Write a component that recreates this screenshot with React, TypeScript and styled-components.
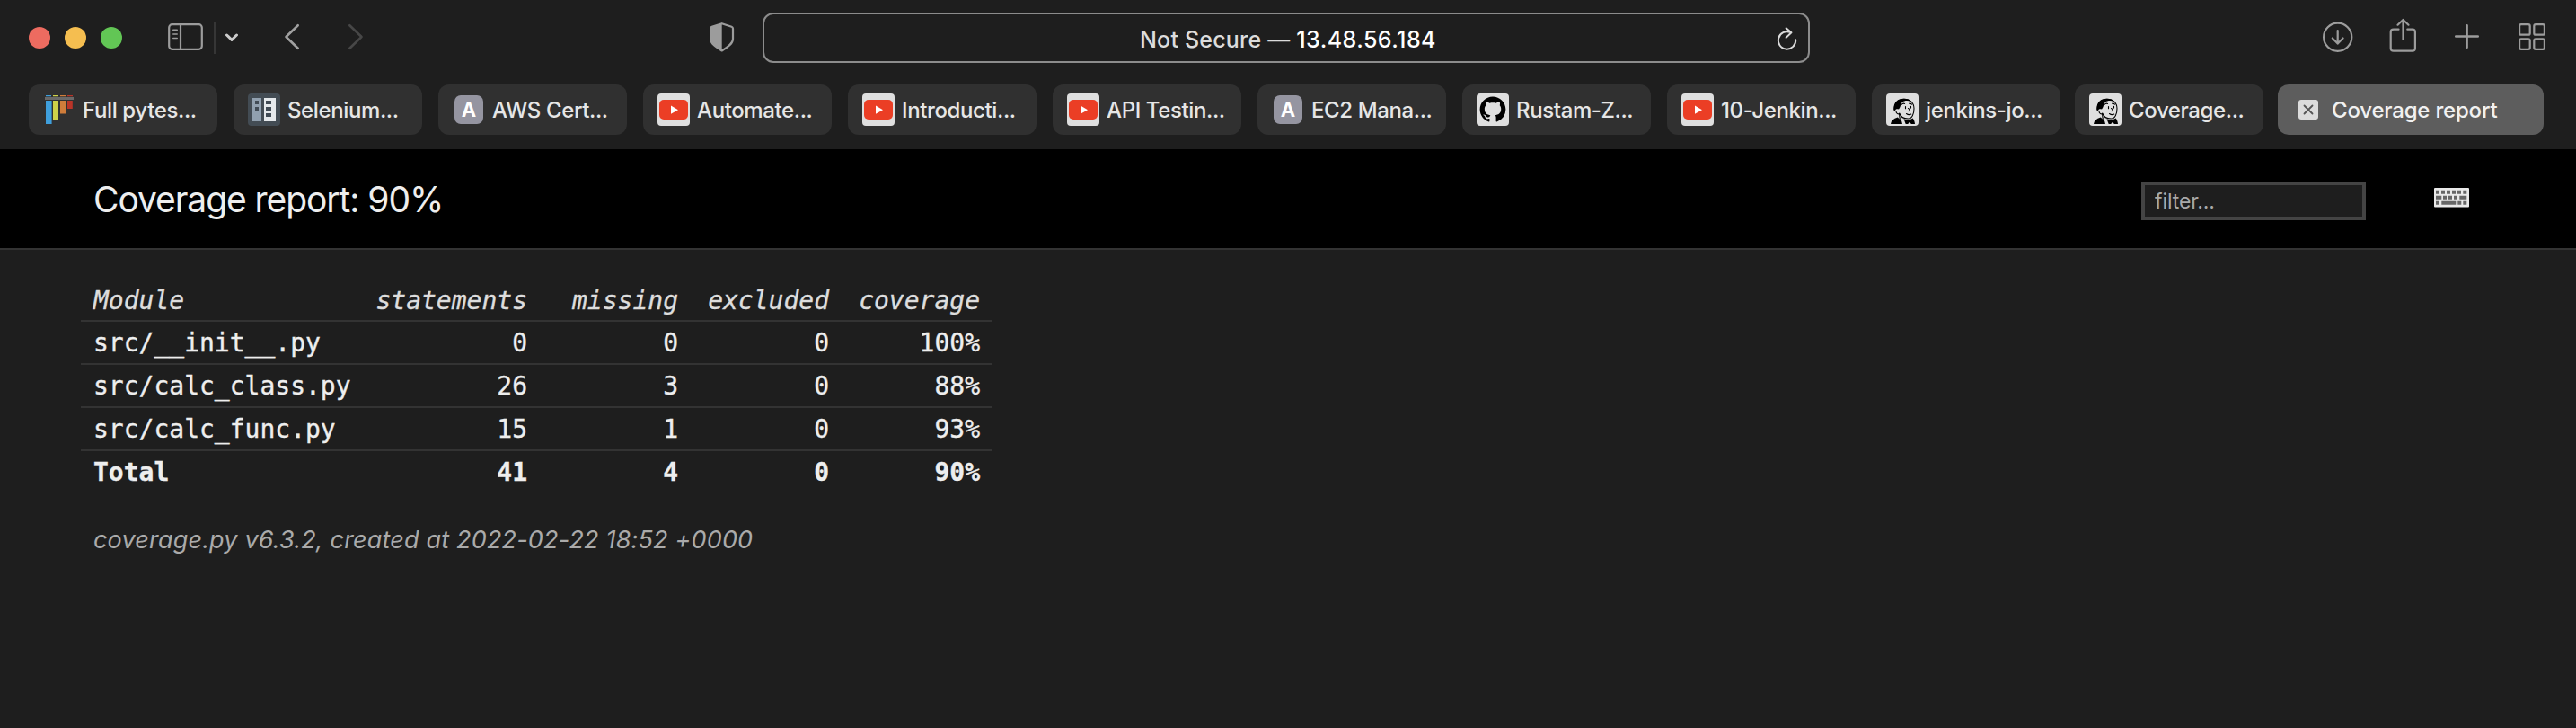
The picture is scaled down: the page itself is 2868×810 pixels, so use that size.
import React from 'react';
import styled, { createGlobalStyle, css } from 'styled-components';

const GlobalStyle = createGlobalStyle`
  *, *::before, *::after { box-sizing: border-box; }
  body {
    margin: 0;
    background: #1e1e1e;
    color: #eee;
    font-family: Inter, "Liberation Sans", sans-serif;
    overflow: hidden;
  }
`;

const Window = styled.div`
  width: 100%;
  min-height: 810px;
  background: #1e1e1e;
`;

/* ---------- Browser chrome ---------- */

const Chrome = styled.header`
  height: 166px;
  background: #1e1e1e;
`;

const Toolbar = styled.div`
  display: flex;
  align-items: center;
  height: 84px;
  padding: 0 32px;
`;

const WindowControls = styled.div`
  display: flex;
  gap: 16px;
`;

const Light = styled.span<{ $color: string }>`
  width: 24px;
  height: 24px;
  border-radius: 50%;
  background: ${(p) => p.$color};
`;

const ToolIcon = styled.svg<{ $gap?: number; $color?: string }>`
  flex: none;
  height: 44px;
  margin-left: ${(p) => p.$gap ?? 0}px;
  fill: none;
  stroke: ${(p) => p.$color ?? '#9c9c9c'};
  stroke-width: 2.2;
  stroke-linecap: round;
  stroke-linejoin: round;
`;

const Divider = styled.span`
  width: 2px;
  height: 36px;
  margin-left: 10px;
  background: #363636;
`;

const AddressBar = styled.div`
  display: flex;
  align-items: center;
  width: 1166px;
  height: 56px;
  margin-left: 30px;
  padding: 3px 11px 0 418px;
  border: 2px solid #8c8c8c;
  border-radius: 12px;
  font-size: 25px;
  font-weight: 500;
  white-space: pre;
`;

const Security = styled.span`
  color: #dcdcdc;
  letter-spacing: 0.2px;
`;

const Host = styled.span`
  flex: 1;
  color: #fff;
  letter-spacing: 0.45px;
`;

const Actions = styled.div`
  display: flex;
  align-items: center;
  margin-left: auto;
`;

const TabBar = styled.nav`
  display: flex;
  padding: 10px 32px 0;
`;

const Tab = styled.div<{ $active?: boolean; $gap: number }>`
  display: flex;
  align-items: center;
  flex: none;
  width: 210px;
  height: 56px;
  margin-left: ${(p) => p.$gap}px;
  padding-left: 16px;
  gap: 8px;
  border-radius: 12px;
  background: #303030;
  color: #e6e6e6;
  font-size: 24px;
  font-weight: 500;
  letter-spacing: -0.38px;
  white-space: nowrap;
  ${(p) =>
    p.$active &&
    css`
      width: 296px;
      padding-left: 23px;
      gap: 15px;
      background: #5d5d5d;
      color: #f1f1f1;
      letter-spacing: -0.2px;
    `}
`;

const Favicon = styled.svg`
  flex: none;
  width: 36px;
  height: 36px;
`;

const LetterIcon = styled.span`
  display: flex;
  align-items: center;
  justify-content: center;
  width: 32px;
  height: 32px;
  margin: 0 2px;
  border-radius: 7px;
  background: #9595a1;
  color: #fff;
  font-size: 22px;
  font-weight: 700;
  letter-spacing: 0;
`;

const CloseIcon = styled.svg`
  flex: none;
  width: 22px;
  height: 22px;
`;

/* ---------- Report page ---------- */

const ReportHeader = styled.div`
  display: flex;
  align-items: center;
  height: 112px;
  padding: 0 119px 0 104px;
  border-bottom: 2px solid #333;
  background: #000;
`;

const Title = styled.h1`
  margin: 0 auto 0 0;
  color: #eee;
  font-size: 39px;
  font-weight: 400;
  letter-spacing: -1.07px;
`;

const Filter = styled.input`
  width: 250px;
  height: 43px;
  margin: 5px 76px 0 0;
  padding: 0 11px;
  border: 4px solid #444;
  border-radius: 0;
  outline: none;
  background: #1e1e1e;
  color: #eee;
  font: 400 23px Inter, sans-serif;
  letter-spacing: -0.1px;
  &::placeholder {
    color: #a9a9a9;
    opacity: 1;
  }
`;

const KeyboardIcon = styled.svg`
  flex: none;
  width: 39px;
  height: 22px;
  margin-top: -2px;
`;

const Content = styled.main`
  padding: 34px 90px 0;
`;

const Table = styled.table`
  border-collapse: separate;
  border-spacing: 0;
  table-layout: fixed;
  width: 1015px;
  font: 28px/44px "DejaVu Sans Mono", monospace;
  -webkit-text-stroke: 0.35px currentColor;
`;

const Cell = styled.td<{ $left?: boolean; $width?: number; $total?: boolean }>`
  height: ${(p) => (p.$total ? 46 : 48)}px;
  padding: 2px 14px 0;
  ${(p) => p.$width && `width: ${p.$width}px;`}
  border-bottom: ${(p) => (p.$total ? 'none' : '2px solid #333')};
  color: #eee;
  font-weight: ${(p) => (p.$total ? 700 : 400)};
  text-align: ${(p) => (p.$left ? 'left' : 'right')};
  white-space: nowrap;
`;

const HeadCell = styled(Cell)`
  height: 46px;
  line-height: 42px;
  color: #ddd;
  font-style: italic;
`;

const Footer = styled.footer`
  margin: 34px 0 0 14px;
  color: #aaa;
  font-size: 27px;
  font-style: italic;
  line-height: 38px;
  letter-spacing: 0.18px;
`;

/* ---------- Favicons ---------- */

const Pytest = () => (
  <Favicon viewBox="0 0 36 36">
    <path fill="#3f9fdc" d="M3 2h6v1.2H3zM3 8h6.6v26H3z" />
    <path fill="#ced149" d="M11 2h6v1.2h-6zM11 8h6v22h-6z" />
    <path fill="#cf7c3a" d="M19 2h6v1.2h-6zM19 8h6v14.6h-6z" />
    <path fill="#b93428" d="M27 2h6v1.2h-6zM27 8h5.8v9H27z" />
    <path fill="#696969" d="M2 4h32v3H2z" />
  </Favicon>
);

const Selenium = () => (
  <Favicon viewBox="0 0 36 36">
    <rect width="36" height="36" rx="4" fill="#434c54" />
    <path fill="#91a0af" d="M5 5h10v26H5z" />
    <path fill="#e4e8eb" d="M18 5h13v26H18z" />
    <path fill="#414b55" d="M8 8h4v4H8zM8 15h4v4H8zM20 8h6v4h-6zM20 15h6v4h-6zM20 22h6v4h-6z" />
  </Favicon>
);

const Youtube = () => (
  <Favicon viewBox="0 0 36 36">
    <rect width="36" height="36" rx="4" fill="#dfdfdf" />
    <rect x="2" y="7" width="32" height="22" rx="5" fill="#eb3e25" />
    <path fill="#fff" d="M15 13.6v9.2l8-4.6z" />
  </Favicon>
);

const Github = () => (
  <Favicon viewBox="0 0 36 36">
    <rect width="36" height="36" rx="4" fill="#dfdfdf" />
    <path
      transform="translate(3.6 3.4) scale(1.8)"
      fill="#000"
      d="M8 0C3.58 0 0 3.58 0 8c0 3.54 2.29 6.53 5.47 7.59.4.07.55-.17.55-.38 0-.19-.01-.82-.01-1.49-2.01.37-2.53-.49-2.69-.94-.09-.23-.48-.94-.82-1.13-.28-.15-.68-.52-.01-.53.63-.01 1.08.58 1.23.82.72 1.21 1.87.87 2.33.66.07-.52.28-.87.51-1.07-1.78-.2-3.64-.89-3.64-3.95 0-.87.31-1.59.82-2.15-.08-.2-.36-1.02.08-2.12 0 0 .67-.21 2.2.82.64-.18 1.32-.27 2-.27.68 0 1.36.09 2 .27 1.53-1.04 2.2-.82 2.2-.82.44 1.1.16 1.92.08 2.12.51.56.82 1.27.82 2.15 0 3.07-1.87 3.75-3.65 3.95.29.25.54.73.54 1.48 0 1.07-.01 1.93-.01 2.2 0 .21.15.46.55.38A8.013 8.013 0 0016 8c0-4.42-3.58-8-8-8z"
    />
  </Favicon>
);

const Jenkins = () => (
  <Favicon viewBox="0 0 36 36">
    <rect width="36" height="36" rx="4" fill="#dfdfdf" />
    <path
      fill="#dfdfdf"
      stroke="#000"
      strokeWidth="1.1"
      d="M9 18.5C9 10 14 6.3 20 6.3c6.500 0 11 4.200 11 10.500 0 5.500-2 11.200-6.500 11.200-4.500 0-8.500-2-9.500-5.500-2 1-4-.5-4-2.800z"
    />
    <path d="M8.300 17.500C8.300 9.500 13 5.700 19.500 5.700c4 0 6.800 1.100 8.800 3.400-3.800-1.600-8-1.500-10 .4-2.600 2-2 5.500-4.300 8-2-.4-3.500-.4-4.500 1.600z" />
    <path d="M5 34c.4-3.400 3-6 7.800-7.400l4.400 4.100L18 34z" />
    <path d="M19.500 28.200l5.200 1.900 5-2.600c1.300 1.800 2.100 4.100 2.300 6.500h-4l-2.200-2-1.600 2h-2.500z" />
    <path
      fill="none"
      stroke="#000"
      strokeWidth="1.100"
      strokeLinecap="round"
      d="M17 12.500c1-1.300 2.300-1.600 3.600-1.100M25.500 11.200c1.200-.2 2.200.2 3 1M21.500 14.500v2.200M27.500 14.300v1.800M24.500 16.500c1.700 1 2 2 .6 3.200M22.500 22.500c1.700 1.200 3.500 1.400 5.300.6M14.500 22c.2 2 .2 4 .8 6.500"
    />
  </Favicon>
);

const Letter = () => <LetterIcon>A</LetterIcon>;

const tabs: { label: string; Icon: React.FC; gap?: number }[] = [
  { label: 'Full pytes...', Icon: Pytest, gap: 0 },
  { label: 'Selenium...', Icon: Selenium },
  { label: 'AWS Cert...', Icon: Letter },
  { label: 'Automate...', Icon: Youtube },
  { label: 'Introducti...', Icon: Youtube },
  { label: 'API Testin...', Icon: Youtube },
  { label: 'EC2 Mana...', Icon: Letter },
  { label: 'Rustam-Z...', Icon: Github },
  { label: '10-Jenkin...', Icon: Youtube },
  { label: 'jenkins-jo...', Icon: Jenkins },
  { label: 'Coverage...', Icon: Jenkins, gap: 16 },
];

const columns = ['statements', 'missing', 'excluded', 'coverage'];

const modules: [string, string, string, string, string][] = [
  ['src/__init__.py', '0', '0', '0', '100%'],
  ['src/calc_class.py', '26', '3', '0', '88%'],
  ['src/calc_func.py', '15', '1', '0', '93%'],
];

const total = ['41', '4', '0', '90%'];

const BrowserToolbar = () => (
  <Toolbar>
    <WindowControls>
      <Light $color="#ed6b60" />
      <Light $color="#f5be50" />
      <Light $color="#62c655" />
    </WindowControls>
    <ToolIcon $gap={50} width="42" viewBox="0 0 42 44">
      <rect x="2.200" y="7.200" width="36.600" height="27.600" rx="3.500" />
      <path d="M15 7.500v27" />
      <path strokeWidth="1.600" d="M6.800 13.400h4.400M6.800 18h4.400M6.800 22.500h4.400" />
    </ToolIcon>
    <Divider />
    <ToolIcon $gap={9} $color="#cbcbcb" width="18" viewBox="0 0 18 44">
      <path strokeWidth="3" d="M3.500 19l5.500 5.400 5.500-5.400" />
    </ToolIcon>
    <ToolIcon $gap={48} $color="#a0a0a0" width="20" viewBox="0 0 20 44">
      <path strokeWidth="2.600" d="M16.700 8.200l-13.200 12.800 13.200 12.800" />
    </ToolIcon>
    <ToolIcon $gap={51} $color="#474747" width="20" viewBox="0 0 20 44">
      <path strokeWidth="2.600" d="M3.300 8.200l13.200 12.800-13.200 12.800" />
    </ToolIcon>
    <ToolIcon $gap={382} width="31" viewBox="0 0 31 44">
      <path d="M15.700 6.200l10.800 3.600c.8.300 1.500.9 1.500 1.900v11.600c0 5.200-5.500 9-12.300 13.200-6.800-4.200-12.500-8-12.500-13.200V11.700c0-1 .5-1.600 1.400-1.900z" />
      <path
        stroke="none"
        fill="#9c9c9c"
        d="M15.700 6L4.600 9.800c-.9.300-1.400.9-1.400 1.900v11.600c0 5.200 5.700 9 12.500 13.200z"
      />
    </ToolIcon>
    <AddressBar>
      <Security>Not Secure — </Security>
      <Host>13.48.56.184</Host>
      <ToolIcon $color="#dadada" width="24" viewBox="0 0 24 44">
        <path strokeWidth="2" d="M21.200 22.300a9.700 9.700 0 1 1-5.700-8.200M10.600 9.300l5.800 5-5.800 5.600" />
      </ToolIcon>
    </AddressBar>
    <Actions>
      <ToolIcon width="36" viewBox="0 0 36 44">
        <circle cx="17.700" cy="21.300" r="15.600" />
        <path d="M17.700 14v14.600M11.800 22.500l5.900 6.100 5.900-6.100" />
      </ToolIcon>
      <ToolIcon $gap={37} width="34" viewBox="0 0 34 44">
        <path d="M12.500 12.700H6.800c-2.200 0-3.100 1-3.100 3.100v17.600c0 2.200.9 3.300 3.100 3.300h21c2.200 0 3.100-1.100 3.100-3.300V15.800c0-2.100-.9-3.100-3.100-3.100h-5.500" />
        <path d="M17.500 24V2.400M11.500 7.700l6-5.700 6 5.700" />
      </ToolIcon>
      <ToolIcon $gap={39} width="30" viewBox="0 0 30 44">
        <path strokeWidth="2.700" d="M15.500 8.300v24.400M3.300 20.500h24.400" />
      </ToolIcon>
      <ToolIcon $gap={41} width="34" viewBox="0 0 34 44">
        <rect x="3.100" y="7.100" width="11.600" height="11.600" rx="1.800" />
        <rect x="19.300" y="7.100" width="11.600" height="11.600" rx="1.800" />
        <rect x="3.100" y="23.300" width="11.600" height="11.600" rx="1.800" />
        <rect x="19.300" y="23.300" width="11.600" height="11.600" rx="1.800" />
      </ToolIcon>
    </Actions>
  </Toolbar>
);

export default function App() {
  return (
    <Window>
      <GlobalStyle />
      <Chrome>
        <BrowserToolbar />
        <TabBar>
          {tabs.map(({ label, Icon, gap = 18 }) => (
            <Tab key={label} $gap={gap}>
              <Icon />
              {label}
            </Tab>
          ))}
          <Tab $active $gap={16}>
            <CloseIcon viewBox="0 0 22 22">
              <rect width="22" height="22" rx="3" fill="#dcdcdc" />
              <path
                stroke="#555"
                strokeWidth="1.800"
                strokeLinecap="round"
                d="M6.500 6.500l9 9M15.500 6.500l-9 9"
              />
            </CloseIcon>
            Coverage report
          </Tab>
        </TabBar>
      </Chrome>

      <ReportHeader>
        <Title>Coverage report: 90%</Title>
        <Filter placeholder="filter..." />
        <KeyboardIcon viewBox="0 0 39 22">
          <rect width="39" height="21.400" rx="1" fill="#e9e9e9" />
          <path
            fill="#666"
            d="M2 2.700h4v4H2zM8 2.700h4v4H8zM14 2.700h4v4h-4zM20 2.700h4v4h-4zM26 2.700h4v4h-4zM32.300 2.700h4v4h-4zM2 8.700h6.300v4H2zM10 8.700h4v4h-4zM16 8.700h4v4h-4zM22 8.700h4v4h-4zM28.300 8.700h8v4h-8zM2 14.700h4v4H2zM8.300 14.700h16v4h-16zM26.300 14.700h4v4h-4zM32.300 14.700h4v4h-4z"
          />
        </KeyboardIcon>
      </ReportHeader>

      <Content>
        <Table>
          <thead>
            <tr>
              <HeadCell as="th" $left>
                Module
              </HeadCell>
              {columns.map((name) => (
                <HeadCell as="th" key={name} $width={name === 'statements' ? 197 : 168}>
                  {name}
                </HeadCell>
              ))}
            </tr>
          </thead>
          <tbody>
            {modules.map(([name, ...values]) => (
              <tr key={name}>
                <Cell $left>{name}</Cell>
                {values.map((value, i) => (
                  <Cell key={columns[i]}>{value}</Cell>
                ))}
              </tr>
            ))}
          </tbody>
          <tfoot>
            <tr>
              <Cell $left $total>
                Total
              </Cell>
              {total.map((value, i) => (
                <Cell $total key={columns[i]}>
                  {value}
                </Cell>
              ))}
            </tr>
          </tfoot>
        </Table>
        <Footer>coverage.py v6.3.2, created at 2022-02-22 18:52 +0000</Footer>
      </Content>
    </Window>
  );
}
